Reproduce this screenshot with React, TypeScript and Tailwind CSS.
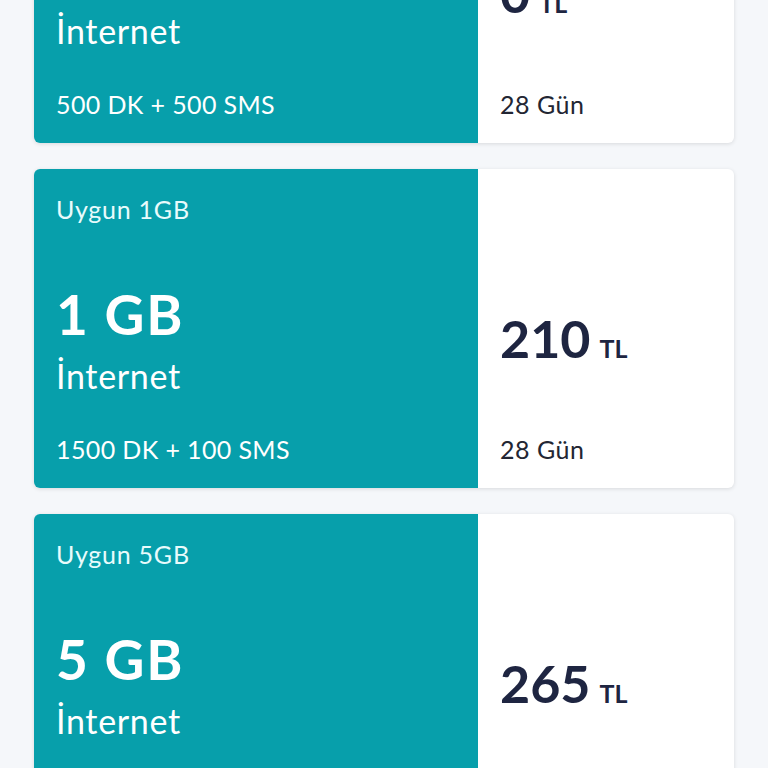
const PACKAGES = [
  { name: 'Uygun 500MB', amount: '500 MB', minutes: '500 DK + 500 SMS', price: '0', days: '28 Gün' },
  { name: 'Uygun 1GB', amount: '1 GB', minutes: '1500 DK + 100 SMS', price: '210', days: '28 Gün' },
  { name: 'Uygun 5GB', amount: '5 GB', minutes: '1500 DK + 100 SMS', price: '265', days: '28 Gün' },
];

export default function App() {
  return (
    <div className="min-h-screen overflow-hidden bg-[#f5f7fa]" style={{ fontFamily: 'Lato, "Noto Sans", sans-serif' }}>
      <div className="mt-[-176px] flex flex-col gap-[26px] px-[34px]">
        {PACKAGES.map(p => (
          <div key={p.name} className="flex h-[319px] shrink-0 overflow-hidden rounded-[6px] bg-white shadow-[0_1px_4px_rgba(0,0,0,0.12)]">
            {/* Left: package details */}
            <div className="flex w-[444px] shrink-0 flex-col bg-[#079fab] px-[22px] pb-[24px] pt-[25px] text-white">
              <p className="text-[25px] leading-[30px] tracking-[0.03em] text-[#e8fbfc]">{p.name}</p>
              <p className="mt-[58px] text-[55px] font-bold leading-[64px] tracking-[0.03em]">{p.amount}</p>
              <p className="mt-[9px] text-[34px] leading-[42px] tracking-[0.02em]">İnternet</p>
              <p className="mt-auto text-[25px] leading-[30px] tracking-[0.015em]">{p.minutes}</p>
            </div>
            {/* Right: price */}
            <div className="flex flex-1 flex-col px-[22px] pb-[24px] pt-[139px] text-[#1e2541]">
              <div className="flex items-baseline">
                <span className="text-[52px] font-bold leading-[60px]">{p.price}</span>
                <span className="ml-[9px] text-[25px] font-bold">TL</span>
              </div>
              <p className="mt-auto text-[25px] leading-[30px] tracking-[0.02em] text-[#222633]">{p.days}</p>
            </div>
          </div>
        ))}
      </div>
    </div>
  );
}
